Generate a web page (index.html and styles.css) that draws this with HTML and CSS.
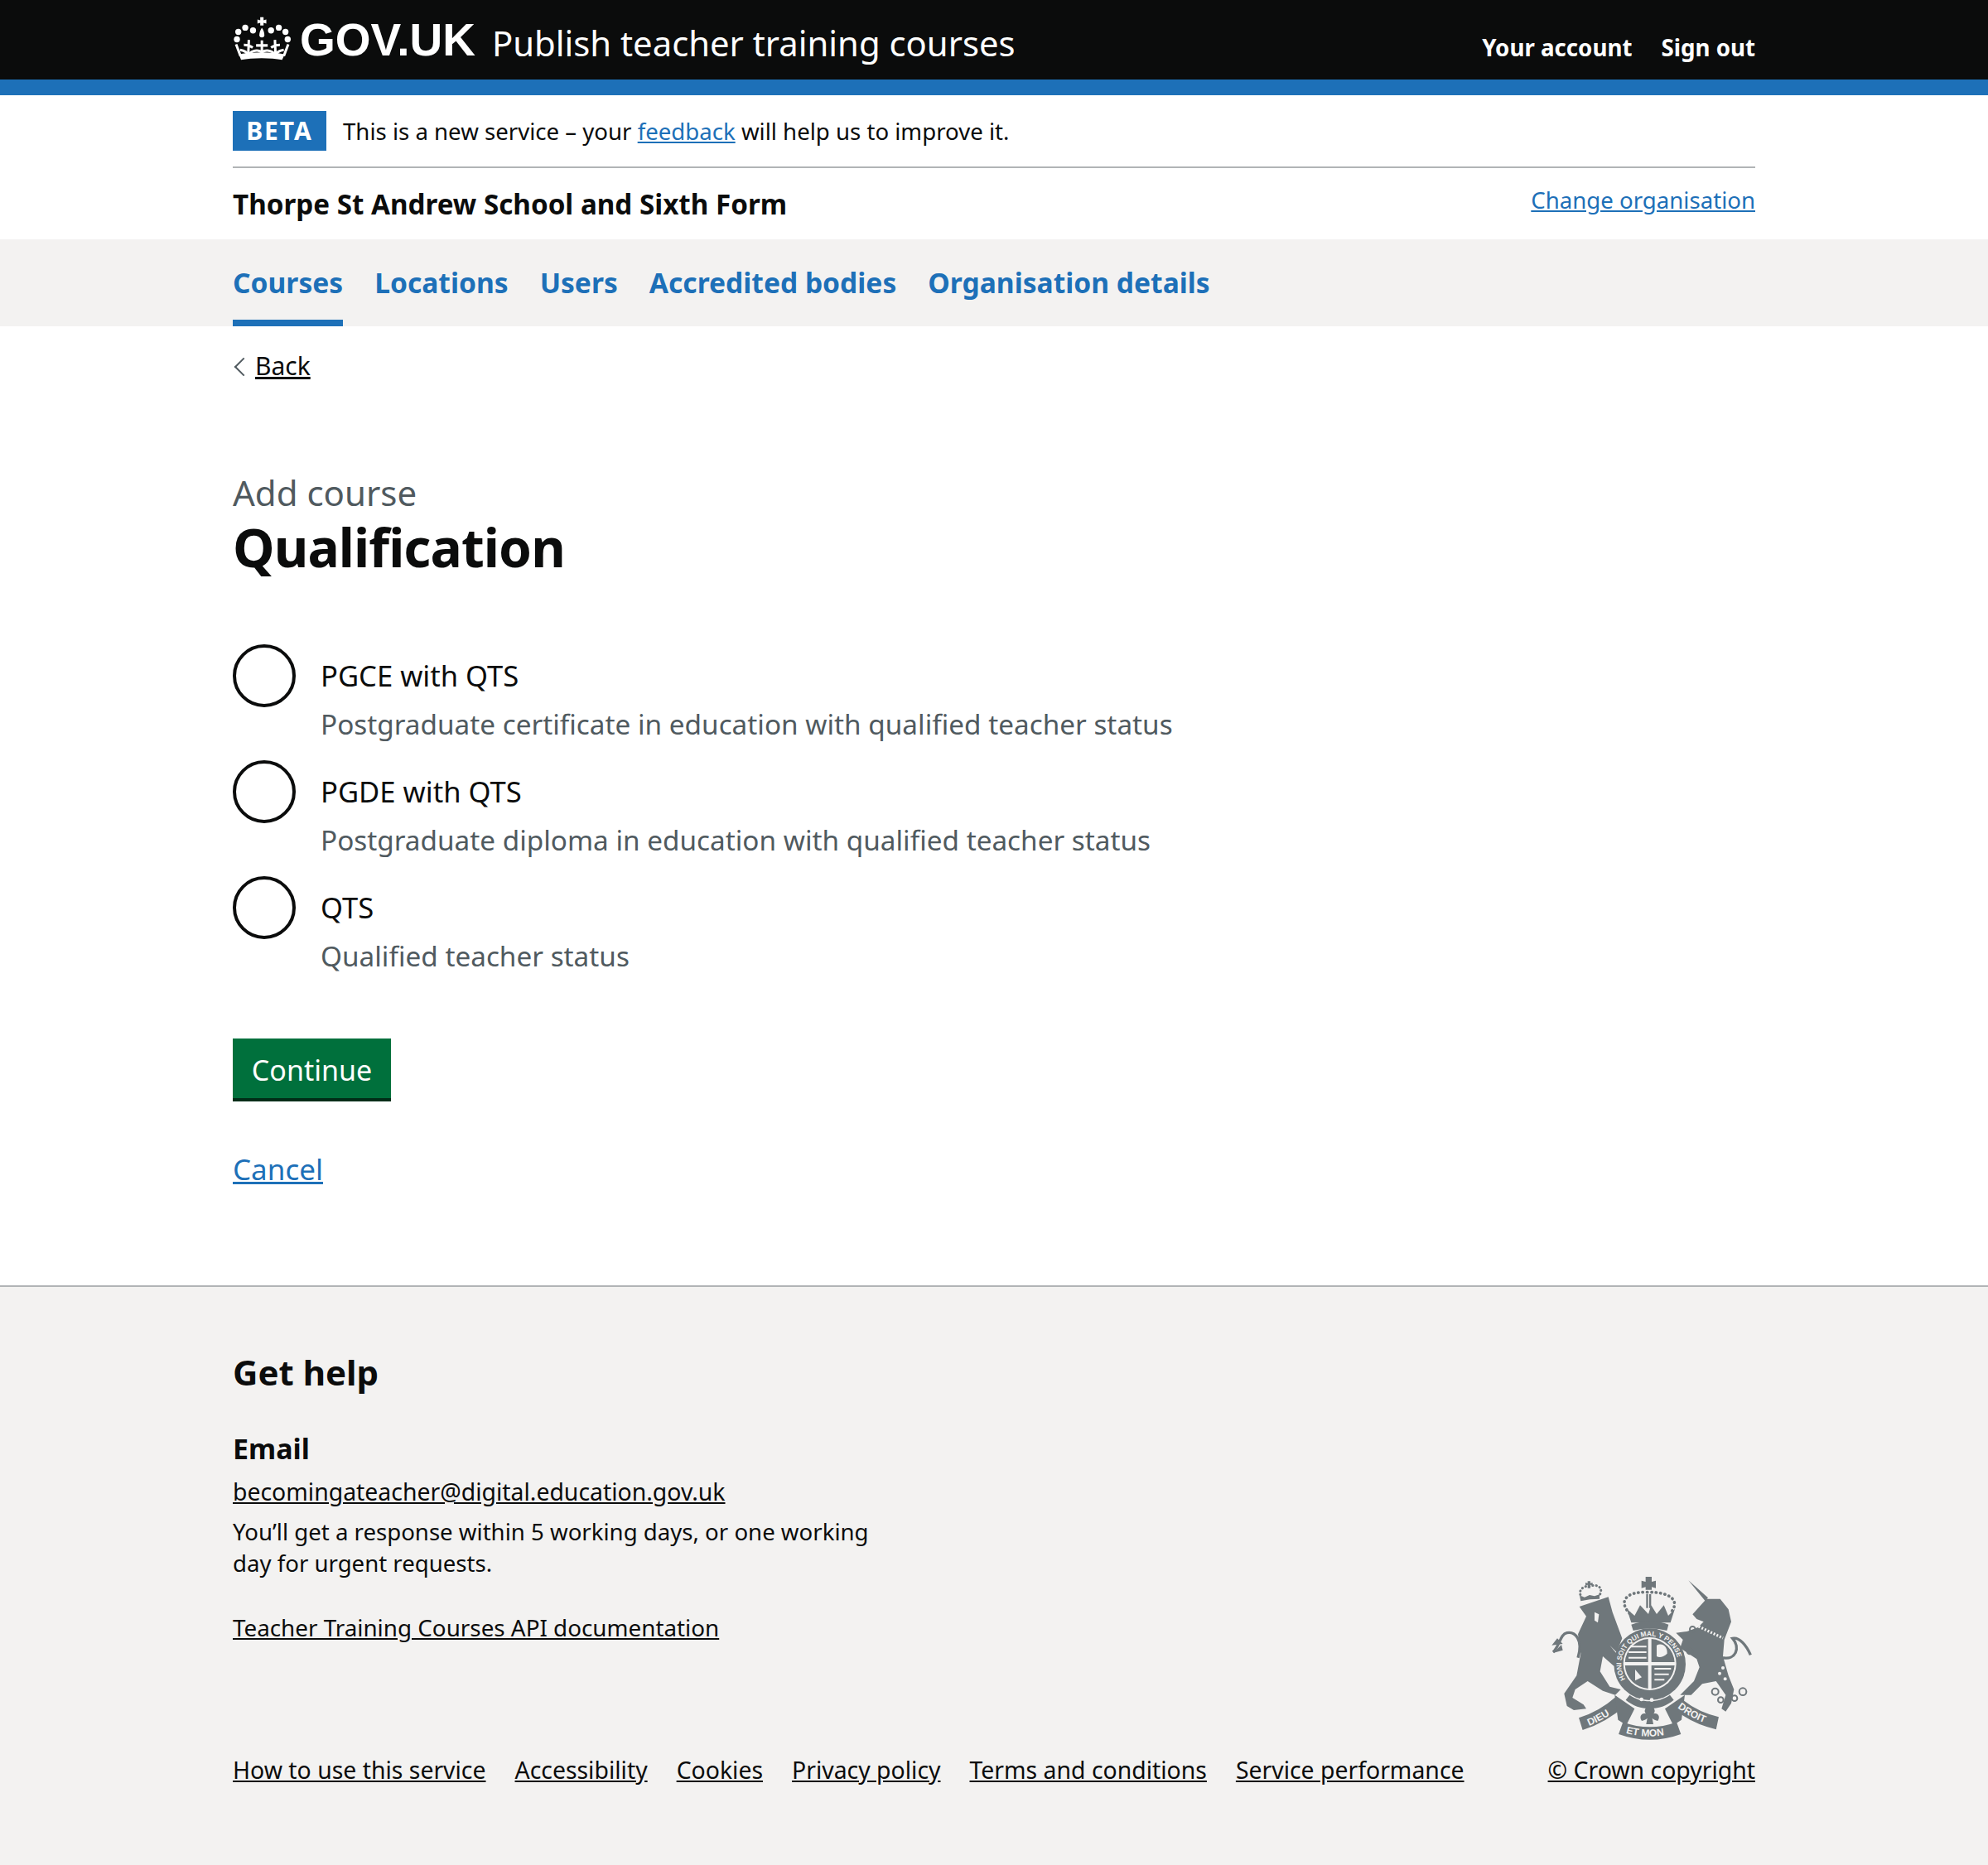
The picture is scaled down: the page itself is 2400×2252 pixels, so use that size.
FILE: index.html
```html
<!DOCTYPE html>
<html lang="en">
<head>
    <meta charset="UTF-8">
    <meta name="viewport" content="width=device-width, initial-scale=1.0">
    <title>Qualification - Publish teacher training courses</title>
    <link rel="stylesheet" href="styles.css">
</head>
<body>

    <header class="site-header">
        <div class="container header-inner">
            <div class="header-brand">
                <svg class="crown" viewBox="30 28 215 158" aria-hidden="true">
                    <circle cx="45" cy="110" r="11"/><circle cx="50" cy="83" r="11"/><circle cx="75" cy="68" r="11"/><circle cx="103" cy="78" r="11"/>
                    <circle cx="168" cy="78" r="11"/><circle cx="196" cy="68" r="11"/><circle cx="220" cy="83" r="11"/><circle cx="228" cy="110" r="11"/>
                    <path d="M135 68c7 10 9 20 9 26a9 9 0 0 1-18 0c0-6 2-16 9-26z"/>
                    <path d="M129 30h12v11l10-3v15l-10-3v10h-12V50l-10 3V38l10 3z"/>
                    <path d="M60 184c40-8 108-8 148 0l9-20c-48-9-116-9-165 0z"/>
                    <path class="crown-line" d="M42 128l16 42M230 128l-16 42"/>
                    <path class="crown-line" d="M56 148c14 2 26 8 30 20 6-14 30-24 49-12 19-12 43-2 49 12 4-12 16-18 30-20"/>
                    <path class="crown-line" d="M135 114v50M114 132h42M88 112l-2 50M70 130c10 0 24 4 32 10M182 112l2 50M200 130c-10 0-24 4-32 10"/>
                </svg>
                <span class="brand-text">GOV.UK</span>
                <a class="service-name" href="#">Publish teacher training courses</a>
            </div>
            <nav class="header-links">
                <a href="#">Your account</a>
                <a href="#">Sign out</a>
            </nav>
        </div>
    </header>

    <div class="container">
        <div class="phase-banner">
            <strong class="phase-tag">BETA</strong>
            <span>This is a new service – your <a class="link" href="#">feedback</a> will help us to improve it.</span>
        </div>
        <div class="org-row">
            <span class="org-name">Thorpe St Andrew School and Sixth Form</span>
            <a class="link org-change" href="#">Change organisation</a>
        </div>
    </div>

    <nav class="tabs">
        <div class="container tabs-inner">
            <a class="tab tab-active" href="#">Courses</a>
            <a class="tab" href="#">Locations</a>
            <a class="tab" href="#">Users</a>
            <a class="tab" href="#">Accredited bodies</a>
            <a class="tab" href="#">Organisation details</a>
        </div>
    </nav>

    <main class="container main">
        <a class="back-link" href="#">Back</a>

        <span class="caption">Add course</span>
        <h1>Qualification</h1>

        <form class="radios">
            <label class="radio">
                <input type="radio" name="qualification">
                <span class="radio-text">
                    <span class="radio-label">PGCE with QTS</span>
                    <span class="radio-hint">Postgraduate certificate in education with qualified teacher status</span>
                </span>
            </label>
            <label class="radio">
                <input type="radio" name="qualification">
                <span class="radio-text">
                    <span class="radio-label">PGDE with QTS</span>
                    <span class="radio-hint">Postgraduate diploma in education with qualified teacher status</span>
                </span>
            </label>
            <label class="radio">
                <input type="radio" name="qualification">
                <span class="radio-text">
                    <span class="radio-label">QTS</span>
                    <span class="radio-hint">Qualified teacher status</span>
                </span>
            </label>
            <button class="button" type="button">Continue</button>
        </form>

        <a class="link cancel" href="#">Cancel</a>
    </main>

    <footer class="site-footer">
        <div class="container footer-grid">
            <div class="footer-left">
                <h2>Get help</h2>
                <h3>Email</h3>
                <a class="footer-link" href="#">becomingateacher@digital.education.gov.uk</a>
                <p>You’ll get a response within 5 working days, or one working day for urgent requests.</p>
                <a class="footer-link api-link" href="#">Teacher Training Courses API documentation</a>
                <ul class="footer-nav">
                    <li><a class="footer-link" href="#">How to use this service</a></li>
                    <li><a class="footer-link" href="#">Accessibility</a></li>
                    <li><a class="footer-link" href="#">Cookies</a></li>
                    <li><a class="footer-link" href="#">Privacy policy</a></li>
                    <li><a class="footer-link" href="#">Terms and conditions</a></li>
                    <li><a class="footer-link" href="#">Service performance</a></li>
                </ul>
            </div>
            <div class="footer-right">
                <svg class="crest" viewBox="30 30 747 615" aria-hidden="true">
                    <defs>
                        <path id="ring-text" d="M322 432a103 103 0 1 1 146 0"/>
                        <path id="rib-left" d="M160 588Q235 560 300 505"/>
                        <path id="rib-mid" d="M290 602Q395 638 500 602"/>
                        <path id="rib-right" d="M490 512Q555 565 640 584"/>
                    </defs>
                    <!-- lion -->
                    <path d="M140 150l105-35 15 55 35 95-20 50-25-25 50 60-35 15-40-35-10 55 35 55 40 10-20 20-45-15-55-35-45 30-10 30 40 25 10 15-45 5-25-15-10-45 45-65 15-80-10-70 30-65z"/>
                    <path class="crest-line" d="M135 335C155 270 125 240 95 245 70 250 70 290 45 315"/>
                    <path d="M60 265l-20 25 40-5zM45 318l30-30 5 20z"/>
                    <path class="crest-arch" d="M150 118C128 90 160 72 178 76 198 68 228 76 215 105"/>
                    <path d="M145 130l-4-20 18 6 18-8 18 4 18-6v16c-24 0-46 2-68 8zM170 58h10v7l8-2v10l-8-2v12h-10V71l-8 2V63l8 2z"/>
                    <path class="crest-gap" d="M195 170l16 8-4 30-12-8z"/>
                    <!-- unicorn -->
                    <path d="M535 55l71 63-10 12z"/>
                    <path d="M600 122h50l30 38 10 45-25 65-5 60 20 70 20 50-10 50-20 30-15-10 15-50-35-50-50 10-40 40h-40l50-50 20-50-10-30-60-40 10-30-25-25 40-5 40-15 20-20-25-10-15-17 25-28z"/>
                    <path class="crest-line" d="M660 335C705 345 725 300 695 265 720 260 745 290 760 325"/>
                    <path class="crest-gap-line" d="M572 222l88 42"/>
                    <circle class="crest-gap" cx="660" cy="372" r="6"/><circle class="crest-gap" cx="648" cy="392" r="6"/><circle class="crest-gap" cx="668" cy="412" r="6"/>
                    <circle class="crest-ring" cx="632" cy="458" r="12"/><circle class="crest-ring" cx="652" cy="488" r="10"/><circle class="crest-ring" cx="702" cy="482" r="10"/><circle class="crest-ring" cx="732" cy="458" r="13"/><circle class="crest-ring" cx="550" cy="232" r="10"/><circle class="crest-ring" cx="540" cy="312" r="10"/>
                    <!-- crown -->
                    <path d="M380 42h22v18l15-4v27l-15-4v10h-22V79l-15 4V56l15 4z"/>
                    <path d="M382 105h7v50h-7zM393 105h7v50h-7z"/>
                    <path class="crest-dots" d="M322 175C280 130 310 95 385 98 470 95 510 130 468 175"/>
                    <path d="M312 158l28 25 20-38 30 32 10-32 20 32 26-32 16 38 24-25-16 50H328z"/>
                    <path d="M328 215c40-16 100-16 135 0l-6 22c-40-10-80-10-122 0z"/>
                    <!-- shield -->
                    <circle cx="395" cy="359" r="130"/>
                    <circle class="crest-white" cx="395" cy="357" r="96"/>
                    <path d="M389 351H305.2A90 90 0 0 1 389 267.2zM401 351V267.2A90 90 0 0 1 484.8 351zM389 363V446.8A90 90 0 0 1 305.2 363zM401 363H484.8A90 90 0 0 1 401 446.8z"/>
                    <path class="crest-white" d="M325 292h58v6h-58zM318 312h65v6h-65zM318 332h65v6h-65zM412 372h60v6h-60zM412 392h52v6h-52zM412 412h36v6h-36zM342 378l24 28-24 12zM420 290c20-10 40 5 38 30-15 15-30 15-38 10z"/>
                    <text class="crest-text"><textPath href="#ring-text" startOffset="5%">HONI SOIT QUI MAL Y PENSE</textPath></text>
                    <path d="M322 470c40 30 105 30 146 0l14 18c-50 42-124 42-174 0z"/>
                    <circle class="crest-white" cx="365" cy="486" r="7"/><circle class="crest-white" cx="402" cy="488" r="7"/>
                    <!-- ribbon -->
                    <path class="crest-band" d="M145 575Q225 550 290 492"/>
                    <path class="crest-band" d="M290 590Q395 628 500 590"/>
                    <path class="crest-band" d="M495 502Q560 555 640 572"/>
                    <path d="M268 470l72 50-30 60-30-20zM522 470l-72 50 30 60 30-20z"/>
                    <path d="M395 502c14 14 24 24 14 36 15-5 26 10 15 26-15-4-20-10-20-10l4 22h-26l4-22s-5 6-20 10c-11-16 0-31 15-26-10-12 0-22 14-36z"/>
                    <text class="crest-text crest-text-big"><textPath href="#rib-left" startOffset="10%">DIEU</textPath></text>
                    <text class="crest-text crest-text-big"><textPath href="#rib-mid" startOffset="9%">ET MON</textPath></text>
                    <text class="crest-text crest-text-big"><textPath href="#rib-right" startOffset="4%">DROIT</textPath></text>
                </svg>
                <a class="footer-link" href="#">© Crown copyright</a>
            </div>
        </div>
    </footer>

</body>
</html>
```

FILE: styles.css
```css
* {
    margin: 0;
    padding: 0;
    box-sizing: border-box;
}

body {
    font-family: "Noto Sans", Arial, sans-serif;
    font-size: 27.6px;
    line-height: 40px;
    color: #0b0c0c;
    background-color: #fff;
}

a {
    color: inherit;
}

.container {
    width: 1838px;
    margin: 0 auto;
}

.link {
    color: #1d70b8;
}

/* black bar */
.site-header {
    background-color: #0b0c0c;
    border-bottom: 19px solid #1d70b8;
    color: #fff;
}

.header-inner {
    display: flex;
    justify-content: space-between;
    height: 96px;
}

.header-brand {
    display: flex;
    align-items: flex-start;
}

.crown {
    width: 72px;
    height: 53px;
    margin-top: 20px;
    fill: #fff;
}

.crown-line {
    fill: none;
    stroke: #fff;
    stroke-width: 9;
}

.brand-text {
    margin-left: 9px;
    font-family: "Liberation Sans", Arial, sans-serif;
    font-size: 55px;
    line-height: 96px;
    font-weight: 700;
}

.service-name {
    margin-left: 20px;
    font-size: 41.8px;
    line-height: 104px;
    text-decoration: none;
}

.header-links {
    display: flex;
    gap: 35px;
    padding-top: 37px;
}

.header-links a {
    font-size: 27.7px;
    font-weight: 700;
    text-decoration: none;
}

/* beta banner + organisation */
.phase-banner {
    display: flex;
    align-items: center;
    gap: 20px;
    padding: 19px 0;
    border-bottom: 2px solid #b1b4b6;
}

.phase-tag {
    width: 113px;
    height: 48px;
    background-color: #1d70b8;
    color: #fff;
    font-size: 30px;
    line-height: 48px;
    letter-spacing: 2px;
    text-align: center;
}

.org-row {
    display: flex;
    justify-content: space-between;
    height: 86px;
    padding-top: 20px;
}

.org-name {
    font-size: 33.2px;
    line-height: 48px;
    font-weight: 700;
}

.org-change {
    height: 40px;
    margin-top: -2px;
}

/* nav */
.tabs {
    background-color: #f3f2f1;
}

.tabs-inner {
    display: flex;
    gap: 38px;
}

.tab {
    height: 105px;
    padding-top: 32px;
    color: #1d70b8;
    font-size: 33.6px;
    font-weight: 700;
    text-decoration: none;
}

.tab-active {
    border-bottom: 8px solid #1d70b8;
}

/* main */
.main {
    display: flex;
    flex-direction: column;
    align-items: flex-start;
    height: 1158px;
}

.back-link {
    position: relative;
    margin: 28px 0 0 27px;
    font-size: 30px;
}

.back-link::before {
    content: "";
    position: absolute;
    left: -22px;
    top: 13px;
    width: 14px;
    height: 14px;
    border-left: 2px solid #505a5f;
    border-bottom: 2px solid #505a5f;
    transform: rotate(45deg);
}

.caption {
    margin-top: 109px;
    color: #505a5f;
    font-size: 42px;
    line-height: 48px;
}

h1 {
    margin-top: 3px;
    font-size: 64px;
    line-height: 78px;
    font-weight: 700;
    letter-spacing: -0.9px;
}

.radios {
    display: flex;
    flex-direction: column;
    align-items: flex-start;
    margin-top: 78px;
}

.radio {
    display: flex;
    gap: 30px;
    height: 140px;
}

.radio input {
    appearance: none;
    width: 76px;
    height: 76px;
    border: 4px solid #0b0c0c;
    border-radius: 50%;
    background-color: #fff;
}

.radio-text {
    display: flex;
    flex-direction: column;
    padding-top: 17px;
}

.radio-label {
    font-size: 34.6px;
    line-height: 42px;
}

.radio-hint {
    margin-top: 16px;
    color: #505a5f;
    font-size: 33.3px;
    line-height: 42px;
}

.button {
    margin-top: 56px;
    width: 191px;
    height: 76px;
    border: 0;
    background-color: #00703c;
    box-shadow: inset 0 -4px 0 #002d18;
    color: #fff;
    font-family: inherit;
    font-size: 34px;
}

.cancel {
    margin-top: 58px;
    font-size: 35px;
    line-height: 48px;
}

/* footer */
.site-footer {
    height: 700px;
    border-top: 2px solid #b1b4b6;
    background-color: #f3f2f1;
}

.footer-grid {
    display: flex;
    justify-content: space-between;
    align-items: flex-end;
    padding-top: 78px;
    font-size: 28.4px;
}

.site-footer h2 {
    font-size: 42px;
    line-height: 50px;
    font-weight: 700;
}

.site-footer h3 {
    margin-top: 45px;
    font-size: 34px;
    line-height: 44px;
    font-weight: 700;
}

.footer-link {
    color: #0b0c0c;
}

.footer-left > .footer-link {
    display: block;
    width: max-content;
    margin-top: 10px;
}

.footer-left p {
    width: 790px;
    margin-top: 9px;
    font-size: 27.6px;
    line-height: 38px;
}

.footer-left > .api-link {
    margin-top: 39px;
    font-size: 27.8px;
}

.footer-nav {
    display: flex;
    gap: 35px;
    margin-top: 132px;
    list-style: none;
}

.footer-right {
    display: flex;
    flex-direction: column;
    align-items: flex-end;
}

.crest {
    width: 249px;
    height: 205px;
    margin-bottom: 12px;
    fill: #6f777b;
}

.crest-line {
    fill: none;
    stroke: #6f777b;
    stroke-width: 10;
}

.crest-arch {
    fill: none;
    stroke: #6f777b;
    stroke-width: 9;
    stroke-dasharray: 1 12;
    stroke-linecap: round;
}

.crest-band {
    fill: none;
    stroke: #6f777b;
    stroke-width: 46;
}

.crest-gap {
    fill: #f3f2f1;
}

.crest-gap-line {
    fill: none;
    stroke: #f3f2f1;
    stroke-width: 10;
    stroke-dasharray: 6 6;
}

.crest-ring {
    fill: none;
    stroke: #6f777b;
    stroke-width: 6;
}

.crest-dots {
    fill: none;
    stroke: #6f777b;
    stroke-width: 11;
    stroke-dasharray: 1 15;
    stroke-linecap: round;
}

.crest-white {
    fill: #f3f2f1;
}

.crest-text {
    fill: #f3f2f1;
    font-family: "Liberation Sans", Arial, sans-serif;
    font-size: 25px;
    font-weight: 700;
}

.crest-text-big {
    font-size: 36px;
}
```
